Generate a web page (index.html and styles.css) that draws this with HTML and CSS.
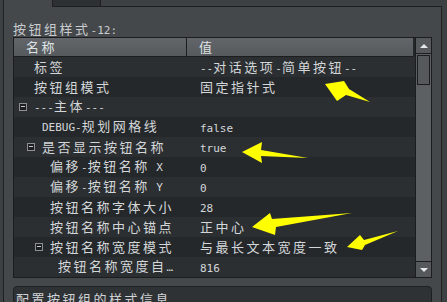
FILE: index.html
```html
<!DOCTYPE html>
<html>
<head>
<meta charset="utf-8">
<link rel="stylesheet" href="styles.css">
</head>
<body>
<div class="screen">
  <div class="tabs">
    <div class="tab tab-active"><span class="tab-text">样式</span></div>
    <div class="tab tab-dark"><span class="tab-text">属性</span></div>
    <div class="tab-fill"></div>
  </div>
  <div class="panel">
    <div class="group-label">按钮组样式<span class="m">-12:</span></div>
    <div class="table">
      <div class="grid">
        <div class="head">
          <div class="hcell hname">名称</div>
          <div class="hcell hval">值</div>
        </div>
        <div class="row odd"><div class="name l0"><span class="slot"></span><span class="txt">标签</span></div><div class="val"><span class="m">--</span>对话选项<span class="m">-</span>简单按钮<span class="m">--</span></div></div>
        <div class="row even"><div class="name l0"><span class="slot"></span><span class="txt">按钮组模式</span></div><div class="val">固定指针式</div></div>
        <div class="row odd"><div class="name l0"><span class="slot"><span class="toggle"></span></span><span class="txt"><span class="m">---</span>主体<span class="m">---</span></span></div><div class="val"></div></div>
        <div class="row even"><div class="name l1"><span class="slot"></span><span class="txt"><span class="m">DEBUG-</span>规划网格线</span></div><div class="val"><span class="m">false</span></div></div>
        <div class="row odd"><div class="name l1"><span class="slot"><span class="toggle"></span></span><span class="txt">是否显示按钮名称</span></div><div class="val"><span class="m">true</span></div></div>
        <div class="row even"><div class="name l2"><span class="slot"></span><span class="txt">偏移<span class="m">-</span>按钮名称<span class="m">&nbsp;X</span></span></div><div class="val"><span class="m">0</span></div></div>
        <div class="row odd"><div class="name l2"><span class="slot"></span><span class="txt">偏移<span class="m">-</span>按钮名称<span class="m">&nbsp;Y</span></span></div><div class="val"><span class="m">0</span></div></div>
        <div class="row even"><div class="name l2"><span class="slot"></span><span class="txt">按钮名称字体大小</span></div><div class="val"><span class="m">28</span></div></div>
        <div class="row odd"><div class="name l2"><span class="slot"></span><span class="txt">按钮名称中心锚点</span></div><div class="val">正中心</div></div>
        <div class="row even"><div class="name l2"><span class="slot"><span class="toggle"></span></span><span class="txt">按钮名称宽度模式</span></div><div class="val">与最长文本宽度一致</div></div>
        <div class="row odd"><div class="name l3"><span class="slot"></span><span class="txt">按钮名称宽度自<span class="m">…</span></span></div><div class="val"><span class="m">816</span></div></div>
      </div>
      <div class="scrollbar">
        <div class="sbtn"><span class="tri-up"></span></div>
        <div class="track"><div class="thumb"></div></div>
        <div class="sbtn"><span class="tri-down"></span></div>
      </div>
    </div>
    <div class="desc">配置按钮组的样式信息</div>
  </div>
  <svg class="arrows" width="447" height="302" viewBox="0 0 447 302">
    <polygon points="325,84 344,81 349,89 370,102 346,95 337,101" fill="#ffff00"/>
    <polygon points="242,152 262,142 261,150 308,158 261,156 262,163" fill="#ffff00"/>
    <polygon points="252,227 270,213 272,219 352,213 276,227 275,235" fill="#ffff00"/>
    <polygon points="347,247 360,235 364,240 398,231 365,245 362,250" fill="#ffff00"/>
  </svg>
</div>
</body>
</html>
```

FILE: styles.css
```css
* { box-sizing: border-box; }
html, body { margin: 0; padding: 0; }
body {
  background: #3e4144;
  font-family: "Noto Sans CJK SC", "Noto Sans", sans-serif;
  font-size: 13px;
  letter-spacing: 2.5px;
  color: #d3d7d9;
}
.m {
  font-family: "DejaVu Sans Mono", monospace;
  font-size: 11px;
  letter-spacing: 0;
}
.screen {
  position: relative;
  width: 447px;
  height: 302px;
  overflow: hidden;
  padding-left: 3px;
  padding-right: 5px;
  display: flex;
  flex-direction: column;
}
.tabs {
  display: flex;
  height: 7px;
  flex: none;
}
.tab {
  width: 49px;
  height: 7px;
  overflow: hidden;
}
.tab-text {
  display: block;
  margin-top: -16px;
  text-align: center;
  line-height: 18px;
  color: #d0d4d6;
}
.tab-active {
  background: #45484b;
  border-left: 1px solid #1f2123;
}
.tab-dark {
  background: #2e3134;
  border: 1px solid #1d1f21;
  border-top: none;
}
.tab-fill {
  flex: 1;
  border-bottom: 1px solid #1d1f21;
}
.panel {
  flex: 1;
  background: #45484b;
  border: 1px solid #1f2123;
  border-top: none;
  padding: 14px 9px 0 9px;
  display: flex;
  flex-direction: column;
}
.group-label {
  line-height: 16px;
  height: 16px;
  color: #c9cdd0;
}
.table {
  height: 241px;
  flex: none;
  display: flex;
  border: 1px solid #1b1d1f;
  background: #25282b;
}
.grid {
  flex: 1;
  display: flex;
  flex-direction: column;
}
.head {
  height: 19px;
  display: flex;
  background: linear-gradient(#62666a, #565a5d);
  border-bottom: 1px solid #1b1d1f;
  margin-right: 2px;
  color: #dfe2e4;
}
.hcell {
  line-height: 18px;
  padding-left: 12px;
}
.hname {
  width: 173px;
  border-right: 1px solid #1b1d1f;
}
.hval { flex: 1; }
.row {
  height: 20px;
  display: flex;
  line-height: 20px;
}
.odd { background: #2c2f32; }
.even { background: #25282b; }
.name {
  width: 173px;
  display: flex;
  align-items: center;
  white-space: nowrap;
  overflow: hidden;
}
.txt { white-space: nowrap; }
.l0 { padding-left: 5px; }
.l1 { padding-left: 13px; }
.l2 { padding-left: 21px; }
.l3 { padding-left: 29px; }
.slot {
  width: 15px;
  flex: none;
  display: flex;
  align-items: center;
  height: 20px;
}
.toggle {
  width: 8px;
  height: 8px;
  border: 1px solid #8c9093;
  background: #1c1e20;
  position: relative;
}
.toggle::after {
  content: "";
  position: absolute;
  left: 1px;
  right: 1px;
  top: 2px;
  height: 1px;
  background: #c8cbcd;
}
.val {
  flex: 1;
  padding-left: 13px;
  white-space: nowrap;
  overflow: hidden;
}
.scrollbar {
  width: 16px;
  flex: none;
  display: flex;
  flex-direction: column;
  background: #5c6063;
  border-left: 1px solid #1b1d1f;
}
.sbtn {
  height: 16px;
  flex: none;
  background: #55595c;
  border-bottom: 1px solid #1b1d1f;
  display: flex;
  align-items: center;
  justify-content: center;
}
.sbtn:last-child {
  border-bottom: none;
  border-top: 1px solid #1b1d1f;
}
.tri-up {
  width: 0; height: 0;
  border-left: 4px solid transparent;
  border-right: 4px solid transparent;
  border-bottom: 4px solid #e6e8e9;
}
.tri-down {
  width: 0; height: 0;
  border-left: 4px solid transparent;
  border-right: 4px solid transparent;
  border-top: 4px solid #e6e8e9;
}
.track {
  flex: 1;
  padding: 1px 1px 0 1px;
}
.thumb {
  height: 30px;
  background: #55595c;
  border: 1px solid #1b1d1f;
}
.desc {
  margin-top: 8px;
  height: 40px;
  flex: none;
  background: #2f3235;
  border: 1px solid #1d1f21;
  border-radius: 4px;
  padding: 4px 2px;
  line-height: 16px;
  color: #cfd3d5;
}
.arrows {
  position: absolute;
  left: 0;
  top: 0;
}
```
